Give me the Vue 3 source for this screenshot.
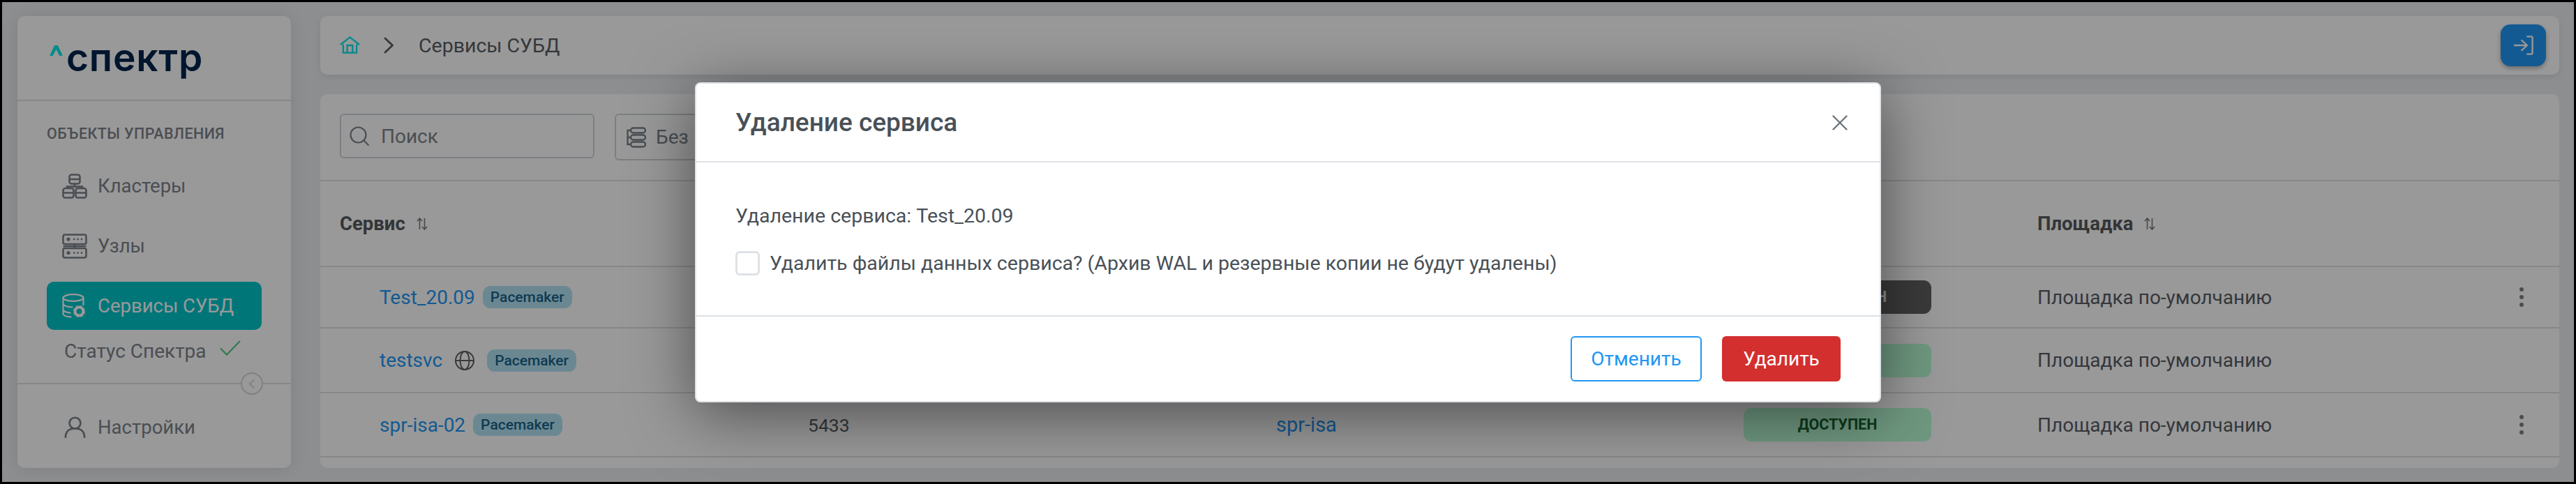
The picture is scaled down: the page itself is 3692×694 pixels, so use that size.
<script setup>
const navItems = [
  { name: 'Кластеры', icon: 'cluster' },
  { name: 'Узлы', icon: 'nodes' },
  { name: 'Сервисы СУБД', icon: 'db', active: true },
]

// the modal hides port, cluster and most of the status in the first two rows
const rows = [
  { name: 'Test_20.09', status: 'ОСТАНОВЛЕН', off: true, menu: true, h: 86 },
  { name: 'testsvc', status: '', globe: true, h: 91 },
  { name: 'spr-isa-02', port: '5433', cluster: 'spr-isa', status: 'ДОСТУПЕН', menu: true, h: 90 },
]
</script>

<template>
  <div class="stage">
    <aside class="sidebar">
      <div class="logo">
        <svg class="logo-mark" viewBox="0 0 20 16"><path d="M0 16 7.5 0h5L20 16h-5L10 6 5 16z" /></svg>
        <span class="logo-text">спектр</span>
      </div>

      <div class="nav-block">
        <div class="nav-title">ОБЪЕКТЫ УПРАВЛЕНИЯ</div>
        <a v-for="item in navItems" :key="item.name" class="nav-item" :class="{ active: item.active }">
          <svg v-if="item.icon === 'cluster'" class="nav-icon" viewBox="0 0 36 36" fill="none" stroke="currentColor" stroke-width="2.6">
            <rect x="10.5" y="1.5" width="15" height="13" rx="3" />
            <path d="M10.5 8h15M18 14.5V20M7 21v-2.5h22V21" />
            <rect x="1.5" y="21" width="15" height="13.5" rx="3" />
            <rect x="19.5" y="21" width="15" height="13.5" rx="3" />
            <path d="M1.5 27.5h15M19.5 27.5h15" />
          </svg>
          <svg v-else-if="item.icon === 'nodes'" class="nav-icon" viewBox="0 0 36 36" fill="none" stroke="currentColor" stroke-width="2.6">
            <rect x="1.5" y="1.5" width="33" height="13.5" rx="2.5" />
            <rect x="1.5" y="21" width="33" height="13.5" rx="2.5" />
            <path d="M18 15v6M1.5 18h33" />
            <circle cx="9" cy="8" r="2.6" fill="currentColor" stroke="none" />
            <circle cx="9" cy="27.5" r="2.6" fill="currentColor" stroke="none" />
            <path d="M16 8h14M16 27.5h14" stroke-width="2.4" stroke-dasharray="2.4 3" />
          </svg>
          <svg v-else class="nav-icon" viewBox="0 0 36 36" fill="none" stroke="currentColor" stroke-width="2.2">
            <ellipse cx="16" cy="6" rx="14.5" ry="4.8" />
            <path d="M1.5 6v23c0 2.5 5 4 12 4.6M30.5 6v11M1.5 14.5c0 2.5 6 5 14 5M1.5 23c0 2.4 5 4.2 11 4.6" />
            <circle cx="24.5" cy="25.5" r="6.2" stroke-width="4.6" stroke-dasharray="3.4 1.4" />
            <circle cx="24.5" cy="25.5" r="6" stroke-width="3.4" />
          </svg>
          <span>{{ item.name }}</span>
        </a>
        <div class="status-line">
          <span>Статус Спектра</span>
          <svg class="status-check" viewBox="0 0 30 22" fill="none" stroke="currentColor" stroke-width="2.4"><path d="M1 11.5 10 20.5 29 1" /></svg>
        </div>
      </div>

      <div class="sidebar-foot">
        <button class="collapse">
          <svg viewBox="0 0 12 18" fill="none" stroke="currentColor" stroke-width="2"><path d="M10 2 2 9l8 7" /></svg>
        </button>
        <a class="nav-item settings">
          <svg class="nav-icon" viewBox="0 0 32 32" fill="none" stroke="currentColor" stroke-width="2.8">
            <circle cx="16" cy="10" r="8.2" />
            <path d="M2 31c0-8 5-13 14-13s14 5 14 13" stroke-linecap="round" />
          </svg>
          <span>Настройки</span>
        </a>
      </div>
    </aside>

    <main class="main">
      <header class="topbar">
        <svg class="home" viewBox="0 0 30 26" fill="none" stroke="currentColor" stroke-width="2.4">
          <path d="M1 12.5 15 1.5l14 11" />
          <path d="M5 12v12.5h20V12M11 24.5V13.5h8v11" />
        </svg>
        <svg class="crumb-sep" viewBox="0 0 14 24" fill="none" stroke="currentColor" stroke-width="2.8" stroke-linecap="round"><path d="M2 2 12.5 12 2 22" /></svg>
        <span class="crumb">Сервисы СУБД</span>
        <button class="login">
          <svg viewBox="0 0 30 28" fill="none" stroke="currentColor" stroke-width="2.4">
            <path d="M1 14h19M12 6l8.5 8-8.5 8" />
            <path d="M20 1h6.5q2 0 2 2v22q0 2-2 2H20" />
          </svg>
        </button>
      </header>

      <section class="card">
        <div class="toolbar">
          <div class="search">
            <svg class="search-icon" viewBox="0 0 28 28" fill="none" stroke="currentColor" stroke-width="2.2">
              <circle cx="12.5" cy="12.5" r="11" />
              <path d="m20.5 20.5 7 7" />
            </svg>
            <span>Поиск</span>
          </div>
          <div class="select">
            <svg class="select-icon" viewBox="0 0 28 30" fill="none" stroke="currentColor" stroke-width="2.4">
              <rect x="6" y="1.5" width="21" height="7" rx="3.5" />
              <rect x="6" y="11.5" width="21" height="7" rx="3.5" />
              <rect x="6" y="21.5" width="21" height="7" rx="3.5" />
              <path d="M6 5H1.5v20H6M1.5 15H6" />
            </svg>
            <span>Без</span>
          </div>
        </div>

        <div class="grid head">
          <div class="th">
            Сервис
            <svg class="sort" viewBox="0 0 16 18" fill="none" stroke="currentColor" stroke-width="1.6"><path d="M4.5 17V1.5M1 5l3.5-4L8 5M11.5 1v15.5M8 13l3.5 4 3.500-4" /></svg>
          </div>
          <div></div>
          <div></div>
          <div></div>
          <div class="th">
            Площадка
            <svg class="sort" viewBox="0 0 16 18" fill="none" stroke="currentColor" stroke-width="1.6"><path d="M4.5 17V1.500M1 5l3.500-4L8 5M11.500 1v15.500M8 13l3.500 4 3.500-4" /></svg>
          </div>
        </div>

        <div v-for="row in rows" :key="row.name" class="grid row" :style="{ height: row.h + 'px' }">
          <div class="name-cell">
            <a class="link">{{ row.name }}</a>
            <svg v-if="row.globe" class="globe" viewBox="0 0 28 28" fill="none" stroke="currentColor" stroke-width="2">
              <circle cx="14" cy="14" r="13" />
              <ellipse cx="14" cy="14" rx="6.5" ry="13" />
              <path d="M1 14h26" />
            </svg>
            <span class="pill">Pacemaker</span>
          </div>
          <div class="port">{{ row.port }}</div>
          <div><a class="link cluster">{{ row.cluster }}</a></div>
          <div><span class="state" :class="{ off: row.off }">{{ row.status }}</span></div>
          <div class="site-cell">
            <span>Площадка по-умолчанию</span>
            <svg v-if="row.menu" class="kebab" viewBox="0 0 8 30" fill="currentColor">
              <circle cx="4" cy="4" r="3" />
              <circle cx="4" cy="15" r="3" />
              <circle cx="4" cy="26" r="3" />
            </svg>
          </div>
        </div>
      </section>
    </main>

    <div class="backdrop">
      <div class="modal" role="dialog" aria-modal="true">
        <div class="modal-head">
          <h2>Удаление сервиса</h2>
          <svg class="close" viewBox="0 0 22 22" fill="none" stroke="currentColor" stroke-width="2.4" stroke-linecap="round"><path d="m1.5 1.5 19 19M20.5 1.5l-19 19" /></svg>
        </div>
        <div class="modal-body">
          <p>Удаление сервиса: Test_20.09</p>
          <label class="check">
            <span class="box"></span>
            <span>Удалить файлы данных сервиса? (Архив WAL и резервные копии не будут удалены)</span>
          </label>
        </div>
        <div class="modal-foot">
          <button class="btn cancel">Отменить</button>
          <button class="btn danger">Удалить</button>
        </div>
      </div>
    </div>
  </div>
</template>

<style>
html, body {
  margin: 0;
  background: #000;
}
</style>

<style scoped>
.stage {
  position: relative;
  box-sizing: border-box;
  width: 3692px;
  height: 694px;
  border: 3px solid #000;
  padding: 20px 21px 20px 22px;
  display: flex;
  gap: 42px;
  background: #ebedf0;
  font-family: Roboto, "Noto Sans", sans-serif;
  font-size: 28.5px;
  color: #7c838a;
  overflow: hidden;
}

/* sidebar */
.sidebar {
  width: 392px;
  flex: none;
  box-sizing: border-box;
  background: #fff;
  border-radius: 10px;
  box-shadow: 0 2px 24px rgba(0, 0, 0, 0.1);
  display: flex;
  flex-direction: column;
}

.logo {
  height: 122px;
  box-sizing: border-box;
  border-bottom: 2px solid #dee2e6;
  display: flex;
  align-items: flex-start;
  padding: 31px 0 0 46px;
  gap: 5px;
}

.logo-mark {
  width: 19px;
  height: 15px;
  margin-top: 11px;
  fill: #02e8e8;
}

.logo-text {
  font-family: Inter, sans-serif;
  font-weight: 600;
  font-size: 55px;
  line-height: 56px;
  color: #00234d;
  letter-spacing: 0.8px;
}

.nav-block {
  height: 406px;
  box-sizing: border-box;
  padding: 32px 42px 0;
  border-bottom: 2px solid #dee2e6;
}

.nav-title {
  font-size: 21.5px;
  font-weight: 500;
  letter-spacing: 0.4px;
  line-height: 30px;
  margin-bottom: 25px;
  white-space: nowrap;
}

.nav-item {
  height: 69px;
  margin-bottom: 17px;
  padding-left: 22px;
  display: flex;
  align-items: center;
  gap: 15px;
  border-radius: 10px;
  color: #7c838a;
  font-size: 27.5px;
}

.nav-item.active {
  background: #00c5ca;
  color: #fff;
  margin-bottom: 0;
}

.nav-icon {
  width: 36px;
  height: 36px;
  flex: none;
}

.status-line {
  margin-left: 25px;
  height: 60px;
  display: flex;
  align-items: center;
  gap: 19px;
  font-size: 28px;
  white-space: nowrap;
}

.status-check {
  width: 30px;
  height: 22px;
  color: #5fc88a;
  margin-top: -8px;
}

.sidebar-foot {
  position: relative;
  flex: 1;
  padding: 27px 42px 0;
}

.collapse {
  position: absolute;
  top: -17px;
  right: 40px;
  width: 32px;
  height: 32px;
  box-sizing: border-box;
  padding: 0;
  background: #fff;
  border: 2px solid #d4d4d4;
  border-radius: 50%;
  display: flex;
  align-items: center;
  justify-content: center;
  color: #d4d4d4;
}

.collapse svg {
  width: 10px;
  height: 15px;
}

.settings {
  margin: 0;
}

.settings .nav-icon {
  width: 31px;
  height: 31px;
  margin-left: 3px;
  margin-right: 2px;
}

/* main column */
.main {
  flex: 1;
  min-width: 0;
  display: flex;
  flex-direction: column;
  gap: 28px;
}

.topbar {
  height: 84px;
  flex: none;
  box-sizing: border-box;
  padding: 0 19px 0 28px;
  background: #fff;
  border-radius: 10px;
  box-shadow: 0 3px 10px rgba(0, 0, 0, 0.08);
  display: flex;
  align-items: center;
}

.home {
  width: 29px;
  height: 25px;
  color: #06e4eb;
  margin-top: -2px;
}

.crumb-sep {
  width: 14px;
  height: 24px;
  margin: 0 36px 0 34px;
  color: #585d64;
}

.crumb {
  color: #585d64;
}

.login {
  margin-left: auto;
  width: 65px;
  height: 60px;
  border: 0;
  border-radius: 14px;
  background: #2196f3;
  box-shadow: 0 3px 6px rgba(0, 0, 0, 0.3);
  color: #fff;
  display: flex;
  align-items: center;
  justify-content: center;
  padding: 0;
}

.login svg {
  width: 29px;
  height: 28px;
}

.card {
  flex: 1;
  min-height: 0;
  background: #fff;
  border-radius: 10px;
  overflow: hidden;
}

.toolbar {
  height: 125px;
  box-sizing: border-box;
  padding: 28px 28px 0;
  border-bottom: 2px solid #dee2e6;
  display: flex;
  align-items: flex-start;
  gap: 29px;
}

.search,
.select {
  box-sizing: border-box;
  border: 2px solid #ced4da;
  border-radius: 6px;
  display: flex;
  align-items: center;
  font-size: 28px;
}

.search {
  width: 365px;
  height: 64px;
  padding-left: 12px;
  gap: 17px;
}

.search-icon {
  width: 28px;
  height: 28px;
}

.select {
  width: 400px;
  height: 67px;
  padding-left: 15px;
  gap: 14px;
}

.select-icon {
  width: 28px;
  height: 30px;
}

.grid {
  display: grid;
  grid-template-columns: 671px 671px 670px 421px 1fr;
  padding-left: 28px;
  border-bottom: 2px solid #dee2e6;
  align-items: center;
}

.head {
  height: 121px;
}

.th {
  display: flex;
  align-items: center;
  gap: 16px;
  font-weight: 700;
  color: #55595e;
  white-space: nowrap;
  font-size: 27.5px;
}

.sort {
  width: 16px;
  height: 18px;
  opacity: 0.8;
}

.row {
  color: #585d64;
}

.name-cell {
  padding-left: 57px;
  display: flex;
  align-items: center;
  gap: 11px;
  font-size: 28px;
}

.link {
  color: #2196f3;
}

.cluster {
  font-size: 29px;
}

.port {
  font-size: 26.5px;
}

.globe {
  width: 28px;
  height: 28px;
  margin: 0 7px;
  color: #616161;
}

.pill {
  background: #b2e3f3;
  color: #19628a;
  font-size: 21px;
  font-weight: 500;
  height: 32px;
  line-height: 32px;
  padding: 0 11px;
  border-radius: 11px;
}

.state {
  display: block;
  width: 269px;
  height: 48px;
  line-height: 48px;
  text-align: center;
  border-radius: 11px;
  background: #b9fdd5;
  color: #186130;
  font-size: 21.5px;
  font-weight: 700;
}

.state.off {
  background: #616161;
  color: #f0f0f0;
}

.site-cell {
  display: flex;
  align-items: center;
  justify-content: space-between;
  padding-right: 50px;
  white-space: nowrap;
  font-size: 28px;
}

.kebab {
  width: 8px;
  height: 30px;
  color: #7c838a;
}

/* modal */
.backdrop {
  position: absolute;
  inset: 0;
  background: rgba(0, 0, 0, 0.4);
  display: flex;
  justify-content: center;
  align-items: flex-start;
  padding-top: 115px;
  box-sizing: border-box;
}

.modal {
  width: 1700px;
  height: 459px;
  box-sizing: border-box;
  background: #fff;
  border: 2px solid #dee2e6;
  border-radius: 8px;
  box-shadow: 0 16px 90px rgba(0, 0, 0, 0.5);
  display: flex;
  flex-direction: column;
  color: #495057;
}

.modal-head {
  height: 113px;
  flex: none;
  box-sizing: border-box;
  padding: 0 46px 0 56px;
  border-bottom: 2px solid #dee2e6;
  display: flex;
  align-items: center;
  justify-content: space-between;
}

.modal-head h2 {
  margin: 0;
  font-size: 37px;
  font-weight: 500;
}

.close {
  width: 22px;
  height: 22px;
  color: #6c757d;
}

.modal-body {
  height: 221px;
  flex: none;
  box-sizing: border-box;
  padding: 59px 56px 0;
  border-bottom: 2px solid #dee2e6;
}

.modal-body p {
  margin: 0 0 32px;
  line-height: 36px;
}

.check {
  display: flex;
  align-items: center;
  gap: 14px;
}

.box {
  width: 35px;
  height: 35px;
  box-sizing: border-box;
  border: 3px solid #dee2e6;
  border-radius: 6px;
  background: #fff;
}

.modal-foot {
  flex: 1;
  display: flex;
  justify-content: flex-end;
  align-items: flex-start;
  gap: 29px;
  padding: 28px 56px 0;
}

.btn {
  height: 65px;
  box-sizing: border-box;
  border-radius: 6px;
  font-family: Roboto, sans-serif;
  font-size: 28px;
  padding: 0;
}

.cancel {
  width: 188px;
  background: #fff;
  border: 2px solid #2196f3;
  color: #2196f3;
}

.danger {
  width: 170px;
  background: #d32f2f;
  border: 0;
  color: #fff;
}
</style>
